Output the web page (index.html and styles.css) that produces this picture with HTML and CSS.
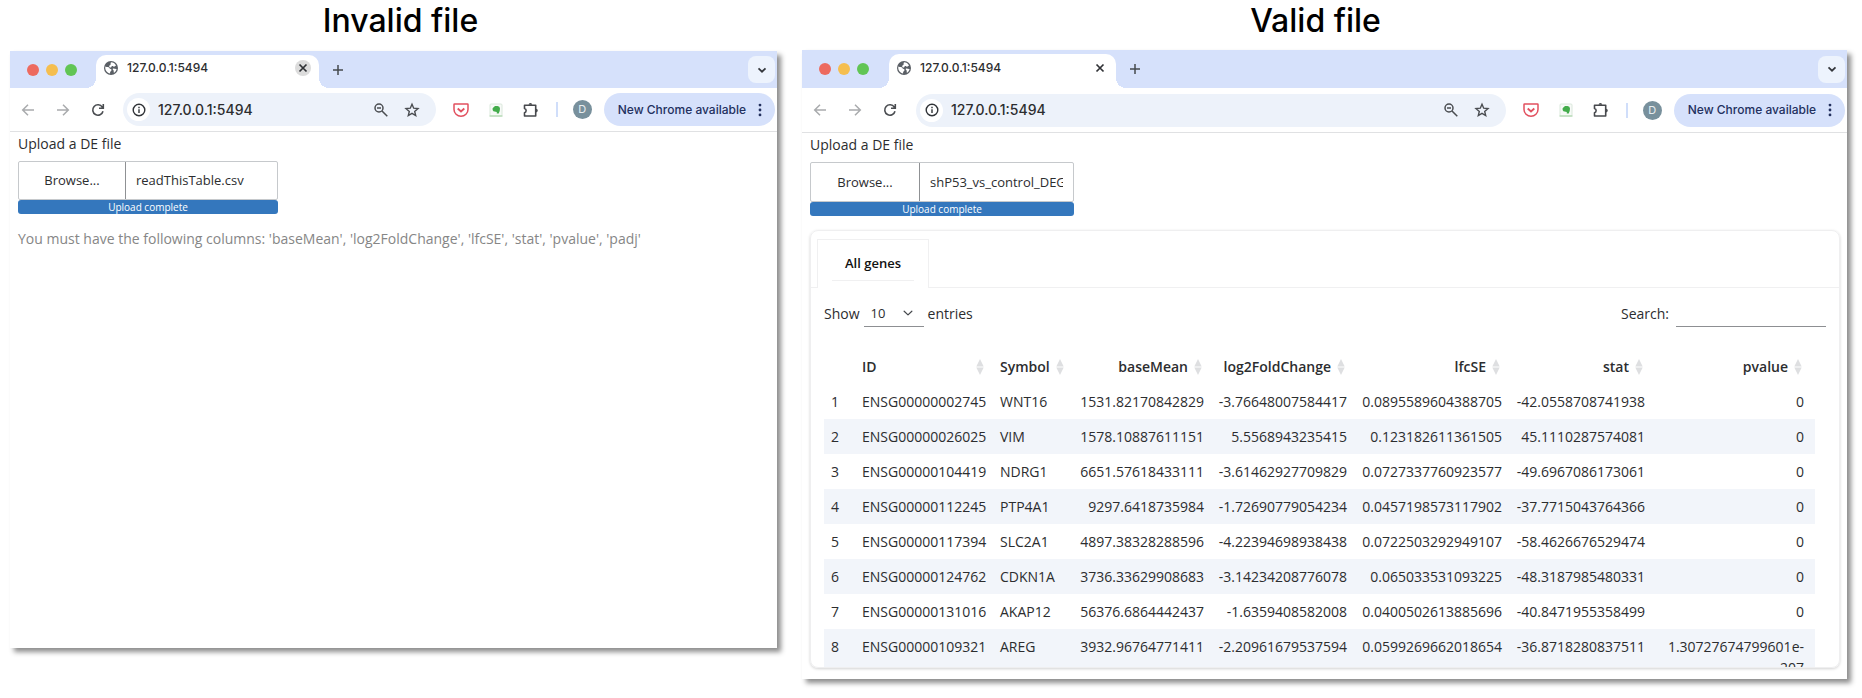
FILE: index.html
```html
<!DOCTYPE html>
<html lang="en">
<head>
<meta charset="utf-8">
<title>File validation</title>
<link rel="stylesheet" href="styles.css">
</head>
<body>
<svg class="defs" aria-hidden="true">
  <symbol id="globe" viewBox="0 0 16 16"><circle cx="8" cy="8" r="7" fill="#5a5f65"/><path d="M2.300 6.600c1.800.8 3.400.2 4.200 1.600.6 1 2 .5 2 1.700 0 1.200-1.400 1.100-1.400 2.400v1.300C4.200 13.200 1.800 10.400 2.300 6.600ZM8 2.300c2.200 0 4.100 1.200 5.100 3.300-1 .2-1.200 1.100-2.200 1.100-.9 0-.8-.9-1.800-.7-.9.2-.3 1.400-1.500 1.400-1.100 0-1.600-.6-1.400-1.500.2-.8 1.200-.6 1.400-1.400.2-.7-.2-1.300.4-2.200ZM10 8.600c1.200-.3 2.300.6 3.600.4-.3 1.700-1.300 3.100-2.700 3.800-.6-.8.200-1.500-.3-2.200-.4-.6-1.400-1.500-.6-2Z" fill="#fff"/></symbol>
  <symbol id="close" viewBox="0 0 16 16"><path d="M4.500 4.500l7 7M11.500 4.500l-7 7" stroke="#303236" stroke-width="1.700"/></symbol>
  <symbol id="plus" viewBox="0 0 16 16"><path d="M8 3v10M3 8h10" stroke="#45494e" stroke-width="1.500"/></symbol>
  <symbol id="chevron" viewBox="0 0 16 16"><path d="M4.500 6.300L8 9.700l3.500-3.400" fill="none" stroke="#33363b" stroke-width="1.700"/></symbol>
  <symbol id="caret" viewBox="0 0 16 16"><path d="M3.600 6L8 10.200 12.400 6" fill="none" stroke="#45484c" stroke-width="1.400" stroke-linecap="round" stroke-linejoin="round"/></symbol>
  <symbol id="back" viewBox="0 0 16 16"><path d="M14 8H3M8 2.700L2.700 8 8 13.300" fill="none" stroke="#a9abad" stroke-width="1.500"/></symbol>
  <symbol id="forward" viewBox="0 0 16 16"><path d="M2 8h11M8 2.700L13.300 8 8 13.300" fill="none" stroke="#a9abad" stroke-width="1.500"/></symbol>
  <symbol id="reload" viewBox="0 0 16 16"><path d="M13 9.200A5.200 5.200 0 1 1 12.300 5.100M13.300 2v4.200H9" fill="none" stroke="#4a4d51" stroke-width="1.600"/></symbol>
  <symbol id="info" viewBox="0 0 16 16"><circle cx="8" cy="8" r="5.800" fill="none" stroke="#303337" stroke-width="1.400"/><path d="M8 7.200v3.800M8 4.800v1.400" stroke="#303337" stroke-width="1.400"/></symbol>
  <symbol id="zoomout" viewBox="0 0 16 16"><circle cx="6" cy="6" r="4" fill="none" stroke="#4a4d51" stroke-width="1.500"/><path d="M4 6h4M9 9l5.300 5.300" stroke="#4a4d51" stroke-width="1.500"/></symbol>
  <symbol id="star" viewBox="0 0 16 16"><path d="M8 2.200l1.700 4 4.300.4-3.300 2.800 1 4.200L8 11.400l-3.700 2.200 1-4.200L2 6.600l4.300-.4Z" fill="none" stroke="#4a4d51" stroke-width="1.400"/></symbol>
  <symbol id="pocket" viewBox="0 0 16 16"><path d="M1.500 2h13q.5 0 .5.600V7.500a7 6.800 0 0 1-14 0V2.600Q1 2 1.500 2Z" fill="none" stroke="#e2505f" stroke-width="1.500"/><path d="M4.700 6.500L8 9.500l3.300-3" fill="none" stroke="#e2505f" stroke-width="1.800"/></symbol>
  <symbol id="clipper" viewBox="0 0 16 16"><rect x="2" y="2" width="12" height="12" rx="1" fill="#f7faf7" stroke="#dbe8dc"/><path d="M1.500 14h13" stroke="#b8dcb9" stroke-width="1.500"/><path d="M4.600 6.200L7 4h2.500q2.400.2 2.500 2.600 0 3-1.300 4.900H8.800V10L5.400 9.200Q4.300 8.400 4.600 6.200Z" fill="#43ac4b"/></symbol>
  <symbol id="puzzle" viewBox="0 0 16 16"><path d="M1.500 3.200H12.700V14H1.500V10.800a2.300 2.300 0 0 0 0-4.400Z" fill="none" stroke="#47494d" stroke-width="1.600" stroke-linejoin="round"/><path d="M5.600 2.800a1.800 1.800 0 0 1 3.600 0ZM13 6.800a1.800 1.800 0 0 1 0 3.600Z" fill="#47494d"/></symbol>
  <symbol id="dots" viewBox="0 0 4 16"><circle cx="2" cy="2.400" r="1.600"/><circle cx="2" cy="8" r="1.600"/><circle cx="2" cy="13.600" r="1.600"/></symbol>
  <symbol id="sort" viewBox="0 0 8 16"><path d="M4 0l3.700 7.600H.3ZM4 16L.3 8.400h7.400Z" fill="#dedfe1"/></symbol>
</svg>
<main class="board">
  <section class="panel panel-invalid">
    <h1 class="caption">Invalid file</h1>
    <div class="window">
      <div class="strip">
        <span class="light red"></span><span class="light amber"></span><span class="light green"></span>
        <div class="tab">
          <svg class="icon"><use href="#globe"/></svg><span class="tab-title">127.0.0.1:5494</span>
          <button class="tab-close hovered" aria-label="Close tab"><svg class="icon"><use href="#close"/></svg></button>
        </div>
        <button class="new-tab" aria-label="New tab"><svg class="icon"><use href="#plus"/></svg></button>
        <button class="tab-search" aria-label="Search tabs"><svg class="icon"><use href="#chevron"/></svg></button>
      </div>
      <div class="toolbar">
        <nav class="history">
          <button aria-label="Back"><svg class="icon"><use href="#back"/></svg></button>
          <button aria-label="Forward"><svg class="icon"><use href="#forward"/></svg></button>
          <button aria-label="Reload"><svg class="icon"><use href="#reload"/></svg></button>
        </nav>
        <div class="omnibox">
          <button class="site-info" aria-label="Site information"><svg class="icon"><use href="#info"/></svg></button>
          <input class="url" type="text" aria-label="Address" value="127.0.0.1:5494">
          <button aria-label="Zoom"><svg class="icon"><use href="#zoomout"/></svg></button>
          <button aria-label="Bookmark"><svg class="icon"><use href="#star"/></svg></button>
        </div>
        <div class="extensions">
          <button aria-label="Pocket"><svg class="icon"><use href="#pocket"/></svg></button>
          <button aria-label="Web clipper"><svg class="icon"><use href="#clipper"/></svg></button>
          <button aria-label="Extensions"><svg class="icon"><use href="#puzzle"/></svg></button>
        </div>
        <span class="divider"></span>
        <button class="avatar" aria-label="Profile">D</button>
        <button class="update">New Chrome available<svg class="more"><use href="#dots"/></svg></button>
      </div>
      <div class="page">
        <label class="upload-label" for="file-a">Upload a DE file</label>
        <div class="upload">
          <div class="upload-row">
            <button class="browse">Browse...</button><input class="filename" id="file-a" type="text" readonly value="readThisTable.csv">
          </div>
          <div class="progress">Upload complete</div>
        </div>
        <p class="message">You must have the following columns: 'baseMean', 'log2FoldChange', 'lfcSE', 'stat', 'pvalue', 'padj'</p>
      </div>
    </div>
  </section>

  <section class="panel panel-valid">
    <h1 class="caption">Valid file</h1>
    <div class="window">
      <div class="strip">
        <span class="light red"></span><span class="light amber"></span><span class="light green"></span>
        <div class="tab">
          <svg class="icon"><use href="#globe"/></svg><span class="tab-title">127.0.0.1:5494</span>
          <button class="tab-close" aria-label="Close tab"><svg class="icon"><use href="#close"/></svg></button>
        </div>
        <button class="new-tab" aria-label="New tab"><svg class="icon"><use href="#plus"/></svg></button>
        <button class="tab-search" aria-label="Search tabs"><svg class="icon"><use href="#chevron"/></svg></button>
      </div>
      <div class="toolbar">
        <nav class="history">
          <button aria-label="Back"><svg class="icon"><use href="#back"/></svg></button>
          <button aria-label="Forward"><svg class="icon"><use href="#forward"/></svg></button>
          <button aria-label="Reload"><svg class="icon"><use href="#reload"/></svg></button>
        </nav>
        <div class="omnibox">
          <button class="site-info" aria-label="Site information"><svg class="icon"><use href="#info"/></svg></button>
          <input class="url" type="text" aria-label="Address" value="127.0.0.1:5494">
          <button aria-label="Zoom"><svg class="icon"><use href="#zoomout"/></svg></button>
          <button aria-label="Bookmark"><svg class="icon"><use href="#star"/></svg></button>
        </div>
        <div class="extensions">
          <button aria-label="Pocket"><svg class="icon"><use href="#pocket"/></svg></button>
          <button aria-label="Web clipper"><svg class="icon"><use href="#clipper"/></svg></button>
          <button aria-label="Extensions"><svg class="icon"><use href="#puzzle"/></svg></button>
        </div>
        <span class="divider"></span>
        <button class="avatar" aria-label="Profile">D</button>
        <button class="update">New Chrome available<svg class="more"><use href="#dots"/></svg></button>
      </div>
      <div class="page">
        <label class="upload-label" for="file-b">Upload a DE file</label>
        <div class="upload">
          <div class="upload-row">
            <button class="browse">Browse...</button><input class="filename" id="file-b" type="text" readonly value="shP53_vs_control_DEGs.csv">
          </div>
          <div class="progress">Upload complete</div>
        </div>
        <div class="card">
          <div class="card-tabs"><div class="card-tab"><a href="#genes">All genes</a></div></div>
          <div class="card-body" id="genes">
            <div class="controls">
              <label class="length">Show <span class="select"><select><option>10</option></select><svg class="icon caret"><use href="#caret"/></svg></span> entries</label>
              <label class="search">Search: <input type="search"></label>
            </div>
            <table class="genes">
              <colgroup><col class="c-row"><col class="c-id"><col class="c-symbol"><col class="c-mean"><col class="c-fold"><col class="c-se"><col class="c-stat"><col></colgroup>
              <thead><tr>
                <th></th>
                <th><span class="head split">ID<svg class="sort"><use href="#sort"/></svg></span></th>
                <th><span class="head split">Symbol<svg class="sort"><use href="#sort"/></svg></span></th>
                <th><span class="head">baseMean<svg class="sort"><use href="#sort"/></svg></span></th>
                <th><span class="head">log2FoldChange<svg class="sort"><use href="#sort"/></svg></span></th>
                <th><span class="head">lfcSE<svg class="sort"><use href="#sort"/></svg></span></th>
                <th><span class="head">stat<svg class="sort"><use href="#sort"/></svg></span></th>
                <th><span class="head">pvalue<svg class="sort"><use href="#sort"/></svg></span></th>
              </tr></thead>
              <tbody>
                <tr><td>1</td><td>ENSG00000002745</td><td>WNT16</td><td>1531.82170842829</td><td>-3.76648007584417</td><td>0.0895589604388705</td><td>-42.0558708741938</td><td>0</td></tr>
                <tr><td>2</td><td>ENSG00000026025</td><td>VIM</td><td>1578.10887611151</td><td>5.5568943235415</td><td>0.123182611361505</td><td>45.1110287574081</td><td>0</td></tr>
                <tr><td>3</td><td>ENSG00000104419</td><td>NDRG1</td><td>6651.57618433111</td><td>-3.61462927709829</td><td>0.0727337760923577</td><td>-49.6967086173061</td><td>0</td></tr>
                <tr><td>4</td><td>ENSG00000112245</td><td>PTP4A1</td><td>9297.6418735984</td><td>-1.72690779054234</td><td>0.0457198573117902</td><td>-37.7715043764366</td><td>0</td></tr>
                <tr><td>5</td><td>ENSG00000117394</td><td>SLC2A1</td><td>4897.38328288596</td><td>-4.22394698938438</td><td>0.0722503292949107</td><td>-58.4626676529474</td><td>0</td></tr>
                <tr><td>6</td><td>ENSG00000124762</td><td>CDKN1A</td><td>3736.33629908683</td><td>-3.14234208776078</td><td>0.065033531093225</td><td>-48.3187985480331</td><td>0</td></tr>
                <tr><td>7</td><td>ENSG00000131016</td><td>AKAP12</td><td>56376.6864442437</td><td>-1.6359408582008</td><td>0.0400502613885696</td><td>-40.8471955358499</td><td>0</td></tr>
                <tr><td>8</td><td>ENSG00000109321</td><td>AREG</td><td>3932.96764771411</td><td>-2.20961679537594</td><td>0.0599269662018654</td><td>-36.8718280837511</td><td>1.30727674799601e-207</td></tr>
              </tbody>
            </table>
          </div>
        </div>
      </div>
    </div>
  </section>
</main>
</body>
</html>
```
FILE: styles.css
```css
* { box-sizing: border-box; }
body { margin: 0; background: #fff; color: #2c2d2f; font: 14px/21px "Open Sans", sans-serif; }
button { padding: 0; border: 0; background: none; font: inherit; color: inherit; }
input, select { font: inherit; color: inherit; border: 0; border-radius: 0; background: none; outline: 0; }
.defs { position: absolute; width: 0; height: 0; }
.icon { display: block; width: 16px; height: 16px; flex: none; }

.board { display: grid; grid-template-columns: 767fr 1045fr; gap: 25px; height: 100vh; padding: 0 15px 19px 10px; }
.panel { display: flex; flex-direction: column; min-width: 0; min-height: 0; }
.caption { margin: 0; height: 50px; font: 500 32px/42px Inter, sans-serif; color: #000; text-align: center; }
.panel-invalid { padding: 1px 0 31px; }
.panel-invalid .caption { padding-left: 14px; line-height: 40px; }
.panel-valid .caption { padding-right: 18px; }
.window { flex: 1; min-height: 0; display: flex; flex-direction: column; background: #fff; box-shadow: 4px 4px 5px rgba(0, 0, 0, .45); }

.strip { display: flex; align-items: center; height: 37px; padding: 0 2px 0 17px; background: #d6e1fb; }
.light { width: 12px; height: 12px; margin-right: 7px; border-radius: 50%; flex: none; }
.red { background: #ed6a5f; }
.amber { background: #f5be4f; }
.green { background: #61c554; }
.tab { position: relative; align-self: flex-end; display: flex; align-items: center; gap: 8px; width: 223px; height: 33px; margin-left: 12px; padding: 0 8px 7px 7px; border-radius: 10px 10px 0 0; background: #fff; }
.tab::before, .tab::after { content: ""; position: absolute; bottom: 0; width: 10px; height: 10px; }
.tab::before { right: 100%; background: radial-gradient(circle at 0 0, transparent 10px, #fff 10px); }
.tab::after { left: 100%; background: radial-gradient(circle at 100% 0, transparent 10px, #fff 10px); }
.tab-title { flex: 1; font: 500 12px/16px Inter, sans-serif; }
.tab-close { border-radius: 50%; }
.hovered { background: #dcdcdc; }
.new-tab { margin-left: 11px; }
.tab-search { display: grid; place-items: center; width: 27px; height: 27px; margin-left: auto; border-radius: 8px; background: #edf3fd; }

.toolbar { display: flex; align-items: center; height: 44px; padding: 0 2px 0 10px; border-bottom: 1px solid #e0e1e3; }
.history { display: flex; gap: 19px; }
.omnibox { flex: 1; min-width: 0; display: flex; align-items: center; gap: 15px; height: 33px; margin-left: 17px; padding: 0 16px 0 4px; border-radius: 17px; background: #edf2fa; }
.site-info { display: grid; place-items: center; flex: none; width: 23px; height: 23px; border-radius: 50%; background: #fff; }
.url { flex: 1; width: 0; min-width: 0; margin-left: -7px; padding: 0; font: 500 14px/20px Inter, sans-serif; }
.extensions { display: flex; gap: 19px; margin-left: 17px; }
.divider { flex: none; width: 2px; height: 15px; margin: 0 15px 0 17px; background: #d0defa; }
.avatar { flex: none; width: 19px; height: 19px; border-radius: 50%; background: #78909c; color: #e8edef; font: 11px/19px Inter, sans-serif; }
.update { flex: none; display: flex; align-items: center; gap: 12px; height: 33px; margin-left: 12px; padding: 0 13px 0 14px; border-radius: 17px; background: #d6e1fb; color: #23305e; font: 500 12px/16px Inter, sans-serif; white-space: nowrap; }
.more { width: 4px; height: 14px; fill: #23305e; }

.page { flex: 1; min-height: 0; display: flex; flex-direction: column; padding: 1px 7px 11px 8px; }
.upload-label { height: 28px; line-height: 21px; }
.upload { width: 260px; }
.upload-row { display: flex; height: 39px; border: 1px solid #c6c9cc; border-radius: 2px; font-size: 13px; }
.browse { width: 107px; border-right: 1px solid #8f9194; }
.filename { flex: 1; min-width: 0; padding: 0 10px; }
.progress { height: 14px; border-radius: 3px; background: #3477bd; color: #fff; font-size: 10px; line-height: 14px; text-align: center; }
.message { margin: 14px 0 0; color: #868686; }

.panel-valid .strip { height: 38px; }
.panel-valid .tab { width: 227px; margin-left: 13px; height: 34px; }
.panel-valid .toolbar { height: 45px; }
.panel-valid .omnibox { margin-left: 18px; }
.panel-valid .upload { width: 264px; }
.panel-valid .upload-row { height: 40px; }
.panel-valid .browse { width: 109px; }

.card { flex: 1; min-height: 0; margin-top: 14px; overflow: hidden; border: 1px solid #efeff0; border-radius: 8px; box-shadow: 0 1px 3px rgba(0, 0, 0, .18); }
.card-tabs { display: flex; padding: 8px 6px 0; border-bottom: 1px solid #f0f0f1; }
.card-tab { height: 49px; margin-bottom: -1px; padding: 6px 14px 0; border: 1px solid #f0f0f1; border-bottom: 0; background: #fff; }
.card-tab a { display: block; height: 35px; padding: 0 13px; border-bottom: 1px solid #f0f0f1; color: #111; font-size: 13px; font-weight: 600; line-height: 35px; text-decoration: none; }
.card-body { padding: 12px 13px; }
.controls { display: flex; justify-content: space-between; }
.length, .search { display: flex; align-items: center; height: 27px; }
.length { gap: 4px; }
.select { position: relative; width: 60px; }
.select select { display: block; width: 100%; height: 27px; padding: 0 7px; border-bottom: 1px solid #8d8f92; font-size: 13px; appearance: none; }
.caret { position: absolute; right: 9px; top: 6px; width: 14px; height: 14px; pointer-events: none; }
.search { gap: 7px; }
.search input { width: 150px; height: 27px; border-bottom: 1px solid #8d8f92; }
.genes { width: calc(100% - 11px); margin-top: 22px; border-collapse: collapse; table-layout: fixed; }
.c-row { width: 31px; }
.c-id, .c-mean { width: 138px; }
.c-symbol { width: 80px; }
.c-fold, .c-stat { width: 143px; }
.c-se { width: 155px; }
.genes th, .genes td { padding: 7px; text-align: right; vertical-align: top; }
.genes th { font-weight: 600; }
.genes td:nth-child(-n+3) { text-align: left; }
.genes td:last-child, .genes th:last-child { padding-right: 11px; }
.genes tbody tr:nth-child(even) { background: #f2f5fa; }
.head { display: flex; align-items: center; justify-content: flex-end; gap: 6px; padding-right: 2px; }
.split { justify-content: space-between; }
.sort { width: 8px; height: 16px; flex: none; }
```
